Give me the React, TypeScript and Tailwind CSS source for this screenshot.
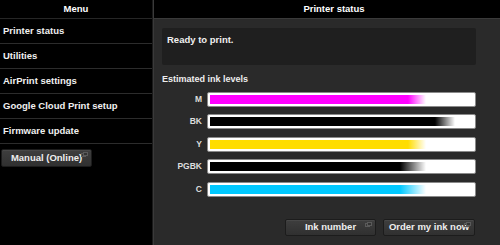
import React from 'react';

const menu = ['Printer status', 'Utilities', 'AirPrint settings', 'Google Cloud Print setup', 'Firmware update'];

const inks = [
  { name: 'M', color: '#ff00ff', level: 216, fade: 18 },
  { name: 'BK', color: '#000000', level: 245, fade: 20 },
  { name: 'Y', color: '#ffdd00', level: 216, fade: 18 },
  { name: 'PGBK', color: '#000000', level: 216, fade: 26 },
  { name: 'C', color: '#00c8ff', level: 216, fade: 26 },
];

const LinkMark = () => (
  <svg width="7" height="6" viewBox="0 0 7 6" className="absolute right-[3px] top-[2px]">
    <rect x="0.5" y="1.5" width="4" height="3" fill="none" stroke="#5a5a5a" strokeWidth="1" />
    <rect x="2.5" y="0.5" width="4" height="3" fill="#333" stroke="#5a5a5a" strokeWidth="1" />
  </svg>
);

const Btn = ({ label, className }: { label: string; className: string }) => (
  <button
    className={`relative flex items-center justify-center rounded-[2px] border border-[#1c1c1c] bg-gradient-to-b from-[#3e3e3e] to-[#303030] p-0 text-[9.5px] font-bold text-[#eeeeee] shadow-[inset_0_1px_0_#484848] ${className}`}
  >
    {label}
    <LinkMark />
  </button>
);

export default function App() {
  return (
    <div
      className="flex h-[245px] w-[500px] overflow-hidden bg-black text-white"
      style={{ fontFamily: '"Liberation Sans", Arial, sans-serif' }}
    >
      <div className="flex w-[152px] flex-col bg-black">
        <div className="flex h-[19px] items-center justify-center border-b border-[#262626] text-[9.5px] font-bold">Menu</div>
        <div className="flex flex-col">
          {menu.map((m) => (
            <div key={m} className="flex h-[25px] items-center border-b border-[#2c2c2c] pl-[3px] text-[9.5px] font-bold text-[#f0f0f0]">
              {m}
            </div>
          ))}
        </div>
        <div className="pl-[1px] pt-[5px]">
          <Btn label="Manual (Online)" className="h-[18px] w-[91px]" />
        </div>
      </div>
      <div className="w-px bg-[#1a1a1a]" />
      <div className="flex flex-1 flex-col border-l border-[#3a3a3a] bg-[#2a2a2a]">
        <div className="flex h-[19px] items-center justify-center border-b border-[#3a3a3a] bg-black pl-[14px] text-[9.5px] font-bold">
          Printer status
        </div>
        <div className="flex flex-col pl-[8px] pr-[24px] pt-[9px]">
          <div className="h-[37px] rounded-[2px] bg-[#1f1f1f] px-[5px] pt-[5px] text-[9.5px] font-bold text-[#f0f0f0]">
            Ready to print.
          </div>
          <div className="mt-[8px] text-[9px] font-bold text-[#eeeeee]">Estimated ink levels</div>
          <div className="mt-[5px] flex flex-col gap-[7.5px]">
            {inks.map((ink) => (
              <div key={ink.name} className="flex items-center">
                <div className="w-[41px] pr-[1px] text-right text-[8.5px] font-bold text-[#dddddd]">{ink.name}</div>
                <div className="ml-[4px] h-[15px] flex-1 rounded-[2px] border border-[#8a8a8a] bg-white p-[2px]">
                  <div
                    className="h-full"
                    style={{
                      width: ink.level,
                      background: `linear-gradient(to right, ${ink.color} ${ink.level - ink.fade}px, ${ink.color}00 ${ink.level}px)`,
                    }}
                  />
                </div>
              </div>
            ))}
          </div>
          <div className="mt-[22px] flex justify-end gap-[7px] pr-[1px]">
            <Btn label="Ink number" className="h-[17px] w-[91px]" />
            <Btn label="Order my ink now" className="h-[17px] w-[92px]" />
          </div>
        </div>
      </div>
    </div>
  );
}
